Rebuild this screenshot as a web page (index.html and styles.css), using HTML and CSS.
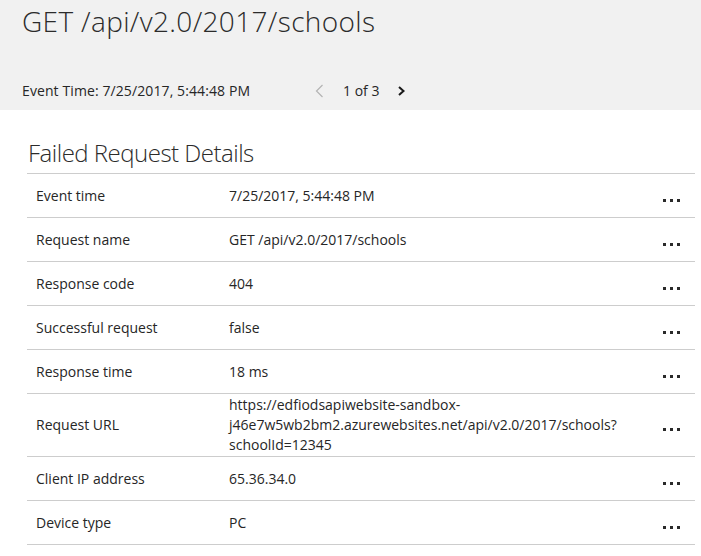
FILE: index.html
```html
<!DOCTYPE html>
<html>
<head>
<meta charset="utf-8">
<link rel="stylesheet" href="styles.css">
</head>
<body>
<header class="blade-header">
  <h1 class="blade-title">GET /api/v2.0/2017/schools</h1>
  <div class="meta">
    <span class="event-time">Event Time: 7/25/2017, 5:44:48 PM</span>
    <div class="pager">
      <svg class="chev prev" width="9" height="14" viewBox="0 0 9 14"><polyline points="7.5,1 1.5,7 7.5,13" fill="none" stroke="#b4b4b4" stroke-width="1.2"/></svg>
      <span class="count">1 of 3</span>
      <svg class="chev next" width="9" height="14" viewBox="0 0 9 14"><polyline points="2,3 6.5,7 2,11" fill="none" stroke="#1a1a1a" stroke-width="2"/></svg>
    </div>
  </div>
</header>
<main class="details">
  <h2 class="section-title">Failed Request Details</h2>
  <div class="grid">
    <div class="row"><span class="label">Event time</span><span class="value">7/25/2017, 5:44:48 PM</span><svg class="more" width="17" height="20" viewBox="0 0 17 20"><rect x="0" y="13" width="3" height="3"/><rect x="7" y="13" width="3" height="3"/><rect x="14" y="13" width="3" height="3"/></svg></div>
    <div class="row"><span class="label">Request name</span><span class="value">GET /api/v2.0/2017/schools</span><svg class="more" width="17" height="20" viewBox="0 0 17 20"><rect x="0" y="13" width="3" height="3"/><rect x="7" y="13" width="3" height="3"/><rect x="14" y="13" width="3" height="3"/></svg></div>
    <div class="row"><span class="label">Response code</span><span class="value">404</span><svg class="more" width="17" height="20" viewBox="0 0 17 20"><rect x="0" y="13" width="3" height="3"/><rect x="7" y="13" width="3" height="3"/><rect x="14" y="13" width="3" height="3"/></svg></div>
    <div class="row"><span class="label">Successful request</span><span class="value">false</span><svg class="more" width="17" height="20" viewBox="0 0 17 20"><rect x="0" y="13" width="3" height="3"/><rect x="7" y="13" width="3" height="3"/><rect x="14" y="13" width="3" height="3"/></svg></div>
    <div class="row"><span class="label">Response time</span><span class="value">18 ms</span><svg class="more" width="17" height="20" viewBox="0 0 17 20"><rect x="0" y="13" width="3" height="3"/><rect x="7" y="13" width="3" height="3"/><rect x="14" y="13" width="3" height="3"/></svg></div>
    <div class="row"><span class="label">Request URL</span><span class="value">https://edfiodsapiwebsite-sandbox-<br>j46e7w5wb2bm2.azurewebsites.net/api/v2.0/2017/schools?<br>schoolId=12345</span><svg class="more" width="17" height="20" viewBox="0 0 17 20"><rect x="0" y="13" width="3" height="3"/><rect x="7" y="13" width="3" height="3"/><rect x="14" y="13" width="3" height="3"/></svg></div>
    <div class="row"><span class="label">Client IP address</span><span class="value">65.36.34.0</span><svg class="more" width="17" height="20" viewBox="0 0 17 20"><rect x="0" y="13" width="3" height="3"/><rect x="7" y="13" width="3" height="3"/><rect x="14" y="13" width="3" height="3"/></svg></div>
    <div class="row"><span class="label">Device type</span><span class="value">PC</span><svg class="more" width="17" height="20" viewBox="0 0 17 20"><rect x="0" y="13" width="3" height="3"/><rect x="7" y="13" width="3" height="3"/><rect x="14" y="13" width="3" height="3"/></svg></div>
  </div>
</main>
</body>
</html>
```

FILE: styles.css
```css
html, body {
  margin: 0;
  padding: 0;
  background: #ffffff;
}
body {
  font-family: "Open Sans", "Noto Sans", "Liberation Sans", sans-serif;
  color: #262626;
  font-size: 14px;
}
.blade-header {
  background: #f1f1f1;
  height: 110px;
  box-sizing: border-box;
  padding: 2px 22px 0 22px;
}
.blade-title {
  margin: 0;
  font-size: 28px;
  line-height: 38px;
  font-weight: 300;
  letter-spacing: 0.35px;
  color: #2b2b2b;
}
.meta {
  margin-top: 41px;
  display: grid;
  grid-template-columns: 293px auto;
  align-items: center;
  height: 20px;
  line-height: 20px;
}
.event-time {
  font-size: 14px;
  letter-spacing: 0.1px;
}
.pager {
  display: flex;
  align-items: center;
}
.chev {
  display: block;
}
.count {
  margin: 0 18px 0 19px;
}
.details {
  padding: 0 6px 0 27px;
}
.section-title {
  margin: 27px 0 4px 1px;
  font-size: 24px;
  line-height: 32px;
  font-weight: 300;
  letter-spacing: -0.5px;
  color: #2b2b2b;
}
.grid {
  border-top: 1px solid #cdcdcd;
}
.row {
  display: grid;
  grid-template-columns: 193px 1fr 17px;
  align-items: center;
  box-sizing: border-box;
  min-height: 44px;
  padding: 1px 15px 1px 9px;
  border-bottom: 1px solid #cdcdcd;
  line-height: 20px;
}
.label, .value {
  font-size: 14px;
}
.more {
  display: block;
  fill: #2a2a2a;
}
```
